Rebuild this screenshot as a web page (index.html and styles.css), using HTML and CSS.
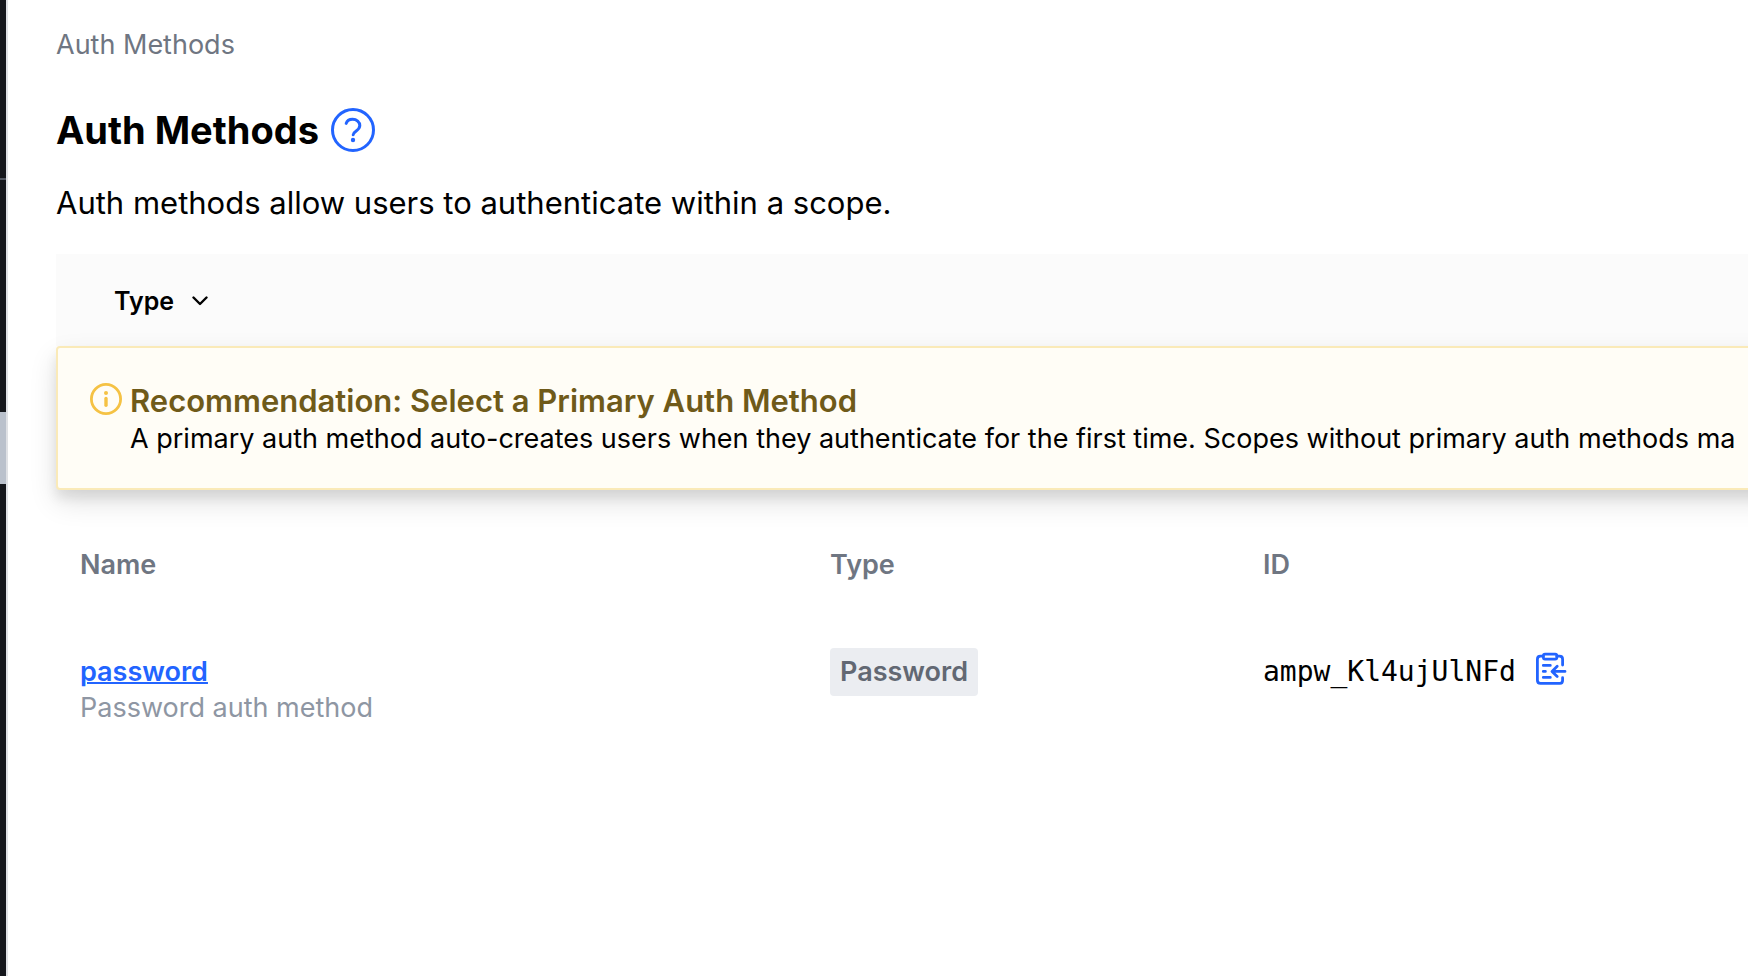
FILE: index.html
```
<!DOCTYPE html>
<html lang="en">
<head>
<meta charset="utf-8">
<title>Auth Methods</title>
<link rel="stylesheet" href="styles.css">
</head>
<body>
<div class="app">
  <nav class="sidebar" aria-label="Main">
    <div class="sidebar-header"></div>
    <div class="sidebar-group"></div>
    <a class="sidebar-active" href="#" aria-label="Auth Methods" aria-current="page"></a>
  </nav>
  <main class="main">
    <nav aria-label="Breadcrumb"><a class="breadcrumb" href="#">Auth Methods</a></nav>
    <header class="page-header">
      <h1 class="title">Auth Methods</h1>
      <a class="help" href="#" aria-label="Help">
        <svg width="44" height="44" viewBox="0 0 44 44" fill="none" stroke="currentColor" stroke-width="3" stroke-linecap="round" stroke-linejoin="round"><circle cx="22" cy="22" r="20.5"/><path d="M15.2 15.4C16 12.6 18.6 11.3 21.6 11.3C25.6 11.3 28.8 13.9 28.8 17.6C28.8 23.1 22.4 22.6 22.2 26.8"/><circle cx="22" cy="32" r="2.2" fill="currentColor" stroke="none"/></svg>
      </a>
    </header>
    <p class="description">Auth methods allow users to authenticate within a scope.</p>
    <div class="filters">
      <button class="filter" type="button">Type
        <svg width="16" height="10" viewBox="0 0 16 10" fill="none" stroke="currentColor" stroke-width="2.4" stroke-linecap="round" stroke-linejoin="round"><path d="M1.5 1.5L8 8L14.5 1.5"/></svg>
      </button>
    </div>
    <section class="notice">
      <svg class="notice-icon" width="32" height="34" viewBox="0 -1 32 34" fill="none" stroke="currentColor" stroke-width="2.8" stroke-linecap="round"><circle cx="16" cy="17" r="14.6"/><path d="M16 16.5V23.3" stroke-width="3.4"/><circle cx="16" cy="11" r="2" fill="currentColor" stroke="none"/></svg>
      <div>
        <h2 class="notice-title">Recommendation: Select a Primary Auth Method</h2>
        <p class="notice-text">A primary auth method auto-creates users when they authenticate for the first time. Scopes without primary auth methods ma</p>
      </div>
    </section>
    <table class="table">
      <thead>
        <tr><th class="col-name" scope="col">Name</th><th class="col-type" scope="col">Type</th><th scope="col">ID</th></tr>
      </thead>
      <tbody>
        <tr>
          <td><a class="link" href="#">password</a><div class="hint">Password auth method</div></td>
          <td><span class="badge">Password</span></td>
          <td>
            <div class="copyable"><code class="id">ampw_Kl4ujUlNFd</code>
            <button class="copy" type="button" aria-label="Copy ID">
              <svg width="32" height="34" viewBox="0 0 32 34" fill="none" stroke="currentColor" stroke-width="2.8" stroke-linecap="round" stroke-linejoin="round"><path d="M8 4.2H5.5C3.3 4.2 2.4 5.4 2.4 7.2V28.2C2.4 30.2 3.5 31.4 5.5 31.4H25C27 31.4 27.6 30.2 27.6 28.2V25.7M22 4.2H24.5C26.7 4.2 27.6 5.4 27.6 7.2V13"/><rect x="8.4" y="2.2" width="13.4" height="5" rx="1.6"/><path d="M8.3 13.4H15.3M8.3 19.4H10.4M8.3 25.4H15.3M30 19.4H17.6M22.2 14.2L17 19.4L22.2 24.6"/></svg>
            </button></div>
          </td>
        </tr>
      </tbody>
    </table>
  </main>
</div>
</body>
</html>
```
FILE: styles.css
```
* { box-sizing: border-box; }
body {
  margin: 0;
  background: #fff;
  color: #000;
  font-family: Inter, "Liberation Sans", sans-serif;
  font-size: 27px;
  line-height: 36px;
}
h1, h2, p { margin: 0; }
button { border: 0; padding: 0; background: none; font: inherit; cursor: pointer; }
svg { display: block; flex: none; }

.app { display: flex; min-height: 100vh; }
.sidebar { flex: none; width: 8px; background: #15171c; border-right: 2px solid #dfe1e5; }
.sidebar-header { height: 180px; border-bottom: 2px solid #525761; }
.sidebar-group { height: 232px; }
.sidebar-active { display: block; height: 72px; background: #bac1cc; }
.main { flex: 1; min-width: 0; overflow: hidden; padding: 27px 0 0 48px; }

.breadcrumb { display: block; color: #6f7682; text-decoration: none; }
.page-header { display: flex; align-items: center; gap: 12px; margin-top: 43px; }
.title { font-size: 38px; line-height: 48px; font-weight: 700; }
.help { color: #2264ff; }
.description { margin-top: 27px; font-size: 31px; line-height: 44px; }

.filters { display: flex; align-items: center; height: 92px; margin-top: 29px; padding: 2px 58px 0; background: #fbfbfb; }
.filter { display: flex; align-items: center; gap: 18px; font-size: 25px; font-weight: 600; color: #000; }

.notice {
  display: flex;
  gap: 8px;
  margin-right: -32px;
  padding: 33px 32px 31px;
  border: 2px solid #faeab8;
  border-radius: 4px;
  background: #fffdf6;
  box-shadow: 0 8px 12px rgba(0, 0, 0, .08), 0 12px 28px rgba(0, 0, 0, .12);
  white-space: nowrap;
}
.notice-icon { color: #f5c244; }
.notice-title { font-size: 31px; line-height: 40px; font-weight: 600; color: #6f5a19; }

.table { width: 100%; margin-top: 33px; border-collapse: collapse; table-layout: fixed; text-align: left; }
.table th { padding: 24px; font-weight: 600; color: #6f7682; }
.table td { padding: 47px 24px; vertical-align: top; }
.col-name { width: 750px; }
.col-type { width: 433px; }
.link { color: #2264ff; font-weight: 600; text-decoration-thickness: 2px; }
.hint { color: #8e96a3; }
.badge { display: inline-block; padding: 6px 10px; margin: -6px 0; border-radius: 4px; background: #ebedf1; color: #626873; font-weight: 600; }
.copyable { display: flex; align-items: center; gap: 19px; }
.id { font-family: "DejaVu Sans Mono", monospace; font-size: 28px; line-height: 36px; }
.copy { padding-bottom: 4px; margin-top: -2px; color: #2264ff; }
```
